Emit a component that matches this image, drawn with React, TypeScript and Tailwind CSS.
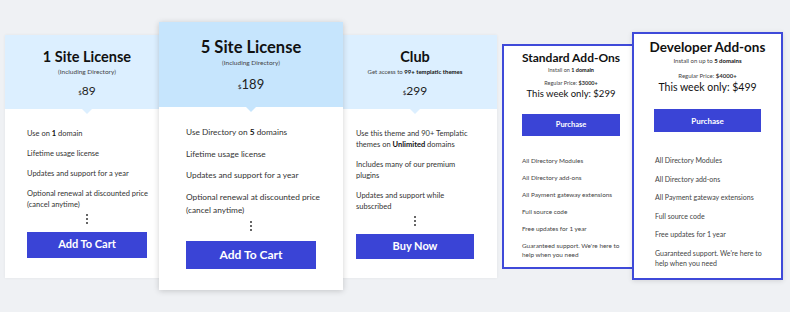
import React from "react";

const font = { fontFamily: "Lato, 'Open Sans', Arial, sans-serif" };

function Dots({ cls }: { cls: string }) {
  return (
    <div className={`flex flex-col items-center justify-center gap-[2px] ${cls}`}>
      <span className="block w-[2px] h-[2px] rounded-full bg-[#333]" />
      <span className="block w-[2px] h-[2px] rounded-full bg-[#333]" />
      <span className="block w-[2px] h-[2px] rounded-full bg-[#333]" />
    </div>
  );
}

function Pointer({ color }: { color: string }) {
  return (
    <div
      className={`absolute left-1/2 -translate-x-1/2 bottom-[-5px] w-0 h-0 border-l-[5px] border-r-[5px] border-t-[5px] border-l-transparent border-r-transparent ${color}`}
    />
  );
}

export default function App() {
  return (
    <div
      style={font}
      className="w-[790px] h-[312px] bg-[#eff1f4] flex items-center pl-[5px] text-[#333] overflow-hidden"
    >
      {/* Card 1 */}
      <div className="w-[164px] h-[243px] bg-white shadow-[0_0_3px_rgba(0,0,0,0.06)] flex flex-col">
        <div className="relative bg-[#dcefff] pt-[12px] pb-[9px] flex flex-col items-center">
          <div className="text-[14.5px] leading-[20px] font-bold text-[#111]">1 Site License</div>
          <div className="text-[6.5px] leading-[10px] text-[#444]">(Including Directory)</div>
          <div className="mt-[7px] text-[12px] leading-[14px] text-[#222]">
            <span className="text-[6px]">$</span>89
          </div>
          <Pointer color="border-t-[#dcefff]" />
        </div>
        <div className="pl-[22px] pr-[12px] pt-[19px] flex flex-col gap-[9px] text-[7.5px] leading-[11px] text-[#333]">
          <div>Use on <b className="text-[#111]">1</b> domain</div>
          <div>Lifetime usage license</div>
          <div>Updates and support for a year</div>
          <div>Optional renewal at discounted price (cancel anytime)</div>
        </div>
        <Dots cls="h-[13px] mt-[3px]" />
        <div className="mx-[22px] mt-[6px] h-[26px] bg-[#3a44d6] flex items-center justify-center text-white text-[11px] font-bold">
          Add To Cart
        </div>
      </div>

      {/* Card 2 */}
      <div className="relative z-10 ml-[-10px] mr-[-10px] w-[184px] h-[268px] bg-white shadow-[0_1px_6px_rgba(0,0,0,0.18)] flex flex-col">
        <div className="relative bg-[#c6e5fd] pt-[15px] pb-[13px] flex flex-col items-center">
          <div className="text-[16.5px] leading-[20px] font-bold text-[#111]">5 Site License</div>
          <div className="mt-[1px] text-[6.5px] leading-[10px] text-[#444]">(Including Directory)</div>
          <div className="mt-[9px] text-[13px] leading-[14px] text-[#222]">
            <span className="text-[6.5px]">$</span>189
          </div>
          <Pointer color="border-t-[#c6e5fd]" />
        </div>
        <div className="pl-[27px] pr-[14px] pt-[19px] flex flex-col gap-[8.5px] text-[8.3px] leading-[13px] text-[#333]">
          <div>Use Directory on <b className="text-[#111]">5</b> domains</div>
          <div>Lifetime usage license</div>
          <div>Updates and support for a year</div>
          <div>Optional renewal at discounted price (cancel anytime)</div>
        </div>
        <Dots cls="h-[13px] mt-[3px]" />
        <div className="mx-[27px] mt-[8.5px] h-[28px] bg-[#3a44d6] flex items-center justify-center text-white text-[12px] font-bold">
          Add To Cart
        </div>
      </div>

      {/* Card 3 */}
      <div className="w-[164px] h-[243px] bg-white shadow-[0_0_3px_rgba(0,0,0,0.06)] flex flex-col">
        <div className="relative bg-[#dcefff] pt-[12px] pb-[9px] flex flex-col items-center">
          <div className="text-[14.5px] leading-[20px] font-bold text-[#111]">Club</div>
          <div className="text-[6px] leading-[10px] text-[#444]">
            Get access to <b className="text-[#111]">99+ templatic themes</b>
          </div>
          <div className="mt-[7px] text-[12px] leading-[14px] text-[#222]">
            <span className="text-[6px]">$</span>299
          </div>
          <Pointer color="border-t-[#dcefff]" />
        </div>
        <div className="pl-[23px] pr-[20px] pt-[19px] flex flex-col gap-[9px] text-[7.5px] leading-[11px] text-[#333]">
          <div>
            <div>Use this theme and 90+ Templatic</div>
            <div>themes on <b className="text-[#111]">Unlimited</b> domains</div>
          </div>
          <div>Includes many of our premium plugins</div>
          <div>Updates and support while subscribed</div>
        </div>
        <Dots cls="h-[13px] mt-[3px]" />
        <div className="mx-[23px] mt-[6.5px] h-[25px] bg-[#3a44d6] flex items-center justify-center text-white text-[11px] font-bold">
          Buy Now
        </div>
      </div>

      {/* Card 4 */}
      <div className="ml-[5px] w-[138px] h-[225px] bg-white border-2 border-[#3f4ad9] flex flex-col">
        <div className="pt-[4px] flex flex-col items-center">
          <div className="text-[12px] leading-[16px] font-bold text-[#111]">Standard Add-Ons</div>
          <div className="text-[5.5px] leading-[8px] text-[#444]">
            Install on <b className="text-[#111]">1 domain</b>
          </div>
          <div className="mt-[5px] text-[5.5px] leading-[8px] text-[#444]">
            Regular Price: <b className="text-[#333]">$3000+</b>
          </div>
          <div className="text-[9.5px] leading-[14px] text-[#111]">This week only: $299</div>
        </div>
        <div className="mx-[18px] mt-[13px] h-[22px] bg-[#3a44d6] flex items-center justify-center text-white text-[7.5px] font-bold">
          Purchase
        </div>
        <div className="pl-[18px] pr-[6px] mt-[20.5px] flex flex-col gap-[8px] text-[6.4px] leading-[9px] text-[#444]">
          <div>All Directory Modules</div>
          <div>All Directory add-ons</div>
          <div>All Payment gateway extensions</div>
          <div>Full source code</div>
          <div>Free updates for 1 year</div>
          <div>
            <div>Guaranteed support. We're here to</div>
            <div>help when you need</div>
          </div>
        </div>
      </div>

      {/* Card 5 */}
      <div className="relative z-10 ml-[-8px] w-[151px] h-[248px] bg-white border-2 border-[#3f4ad9] shadow-[0_1px_5px_rgba(0,0,0,0.12)] flex flex-col">
        <div className="pt-[4px] flex flex-col items-center">
          <div className="text-[13.5px] leading-[18px] font-bold text-[#111]">Developer Add-ons</div>
          <div className="mt-[1px] text-[6px] leading-[8px] text-[#444]">
            Install on up to <b className="text-[#111]">5 domains</b>
          </div>
          <div className="mt-[7px] text-[6px] leading-[8px] text-[#444]">
            Regular Price: <b className="text-[#333]">$4000+</b>
          </div>
          <div className="text-[10.5px] leading-[14px] text-[#111]">This week only: $499</div>
        </div>
        <div className="mx-[20px] mt-[15px] h-[23px] bg-[#3a44d6] flex items-center justify-center text-white text-[8px] font-bold">
          Purchase
        </div>
        <div className="pl-[21px] pr-[6px] mt-[23px] flex flex-col gap-[8.5px] text-[7px] leading-[10px] text-[#444]">
          <div>All Directory Modules</div>
          <div>All Directory add-ons</div>
          <div>All Payment gateway extensions</div>
          <div>Full source code</div>
          <div>Free updates for 1 year</div>
          <div>
            <div>Guaranteed support. We're here to</div>
            <div>help when you need</div>
          </div>
        </div>
      </div>
    </div>
  );
}
